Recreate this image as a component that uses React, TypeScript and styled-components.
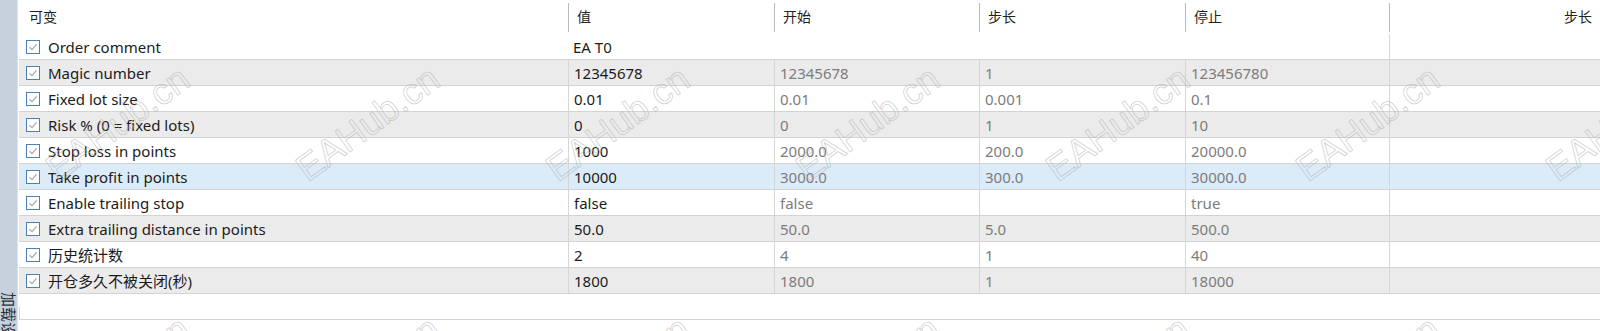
import styled, { createGlobalStyle } from "styled-components";

type Param = {
  name: string;
  value: string;
  start?: string;
  step?: string;
  stop?: string;
  span?: boolean;
};

const params: Param[] = [
  { name: "Order comment", value: "EA T0", span: true },
  { name: "Magic number", value: "12345678", start: "12345678", step: "1", stop: "123456780" },
  { name: "Fixed lot size", value: "0.01", start: "0.01", step: "0.001", stop: "0.1" },
  { name: "Risk % (0 = fixed lots)", value: "0", start: "0", step: "1", stop: "10" },
  { name: "Stop loss in points", value: "1000", start: "2000.0", step: "200.0", stop: "20000.0" },
  { name: "Take profit in points", value: "10000", start: "3000.0", step: "300.0", stop: "30000.0" },
  { name: "Enable trailing stop", value: "false", start: "false", step: "", stop: "true" },
  { name: "Extra trailing distance in points", value: "50.0", start: "50.0", step: "5.0", stop: "500.0" },
  { name: "历史统计数", value: "2", start: "4", step: "1", stop: "40" },
  { name: "开仓多久不被关闭(秒)", value: "1800", start: "1800", step: "1", stop: "18000" },
];

const SELECTED = 5;

// watermark grid, 250px apart
const marks: { x: number; y: number }[] = [];
for (let r = 0; r < 2; r++) {
  for (let c = 0; c < 7; c++) {
    marks.push({ x: 118 + c * 250, y: 124 + r * 250 });
  }
}

const CheckBox = () => (
  <Box>
    <svg width="12" height="12" viewBox="0 0 12 12">
      <path d="M2.5 6.2 L5 8.6 L9.6 3.4" fill="none" stroke="#ababab" strokeWidth="1.3" />
    </svg>
  </Box>
);

export default function App() {
  return (
    <>
      <GlobalStyle />
      <Page>
        <SideStrip>
          <SideLabel>加载设置</SideLabel>
        </SideStrip>
        <Table>
          <Header>
            <HeadCell $first>可变</HeadCell>
            <HeadCell>值</HeadCell>
            <HeadCell>开始</HeadCell>
            <HeadCell>步长</HeadCell>
            <HeadCell>停止</HeadCell>
            <HeadCell $right>步长</HeadCell>
          </Header>
          {params.map((p, i) => (
            <Row key={p.name} $tone={i === SELECTED ? "selected" : i % 2 ? "gray" : "white"}>
              <NameCell>
                <CheckBox />
                <span>{p.name}</span>
              </NameCell>
              {p.span ? (
                <SpanCell>{p.value}</SpanCell>
              ) : (
                <>
                  <Cell>{p.value}</Cell>
                  <Cell $muted>{p.start}</Cell>
                  <Cell $muted>{p.step}</Cell>
                  <Cell $muted>{p.stop}</Cell>
                </>
              )}
              <Cell />
            </Row>
          ))}
          <EmptyRow>
            <SpanCell />
            <Cell />
          </EmptyRow>
        </Table>
        {marks.map((m, i) => (
          <Watermark key={i} $x={m.x} $y={m.y}>
            EAHub.cn
          </Watermark>
        ))}
      </Page>
    </>
  );
}

const GlobalStyle = createGlobalStyle`
  html, body {
    margin: 0;
    padding: 0;
    background: #ffffff;
    overflow: hidden;
  }
  * {
    box-sizing: border-box;
  }
`;

const Page = styled.div`
  position: relative;
  display: flex;
  width: 1600px;
  height: 331px;
  overflow: hidden;
  background: #ffffff;
  font-family: "Noto Sans", "Noto Sans CJK SC", sans-serif;
  font-size: 15px;
  color: #1b1b1b;
`;

const SideStrip = styled.div`
  width: 18px;
  flex-shrink: 0;
  background: #c7d1dd;
  border-right: 1px solid #dfe4ea;
  overflow: hidden;
  display: flex;
  justify-content: center;
  padding-top: 292px;
`;

const SideLabel = styled.div`
  writing-mode: vertical-rl;
  text-orientation: sideways;
  font-size: 15px;
  line-height: 17px;
  color: #2a2f36;
  white-space: nowrap;
`;

const Table = styled.div`
  flex: 1;
  margin-left: 1px;
  display: flex;
  flex-direction: column;
`;

const columns = "549px 206px 205px 206px 204px 1fr";

const Header = styled.div`
  display: grid;
  grid-template-columns: ${columns};
  height: 34px;
  padding-top: 3px;
  padding-bottom: 2px;
  background: #ffffff;
`;

const HeadCell = styled.div<{ $first?: boolean; $right?: boolean }>`
  display: flex;
  align-items: center;
  justify-content: ${({ $right }) => ($right ? "flex-end" : "flex-start")};
  padding: 0 ${({ $right }) => ($right ? "8px" : "0")} 3px
    ${({ $first }) => ($first ? "10px" : "8px")};
  border-left: ${({ $first }) => ($first ? "none" : "1px solid #b9b9b9")};
  font-size: 14px;
  color: #222222;
`;

const tones = {
  white: "#ffffff",
  gray: "#ebebeb",
  selected: "#dcebf8",
};

const Row = styled.div<{ $tone: keyof typeof tones }>`
  display: grid;
  grid-template-columns: ${columns};
  height: 26px;
  background: ${({ $tone }) => tones[$tone]};
  border-bottom: 1px solid #d3d3d3;
`;

const EmptyRow = styled.div`
  display: grid;
  grid-template-columns: 549px 821px 1fr;
  height: 26px;
  background: #ffffff;
  border-bottom: 1px solid #d3d3d3;
`;

const NameCell = styled.div`
  display: flex;
  align-items: center;
  gap: 8px;
  padding-left: 7px;
  white-space: nowrap;
`;

const Box = styled.span`
  width: 14px;
  height: 14px;
  border: 1px solid #4c80b8;
  background: #ffffff;
  display: flex;
  align-items: center;
  justify-content: center;
  flex-shrink: 0;
`;

const Cell = styled.div<{ $muted?: boolean }>`
  display: flex;
  align-items: center;
  padding-left: 5px;
  border-left: 1px solid #d6d6d6;
  color: ${({ $muted }) => ($muted ? "#7c7c7c" : "#1b1b1b")};
  white-space: nowrap;
`;

const SpanCell = styled.div`
  grid-column: span 4;
  display: flex;
  align-items: center;
  padding-left: 5px;
`;

const Watermark = styled.span<{ $x: number; $y: number }>`
  position: absolute;
  left: ${({ $x }) => $x}px;
  top: ${({ $y }) => $y}px;
  transform: translate(-50%, -50%) rotate(-36deg);
  font-family: "Liberation Sans", sans-serif;
  font-size: 37px;
  color: transparent;
  -webkit-text-stroke: 0.8px rgba(175, 175, 175, 0.6);
  white-space: nowrap;
  pointer-events: none;
`;
